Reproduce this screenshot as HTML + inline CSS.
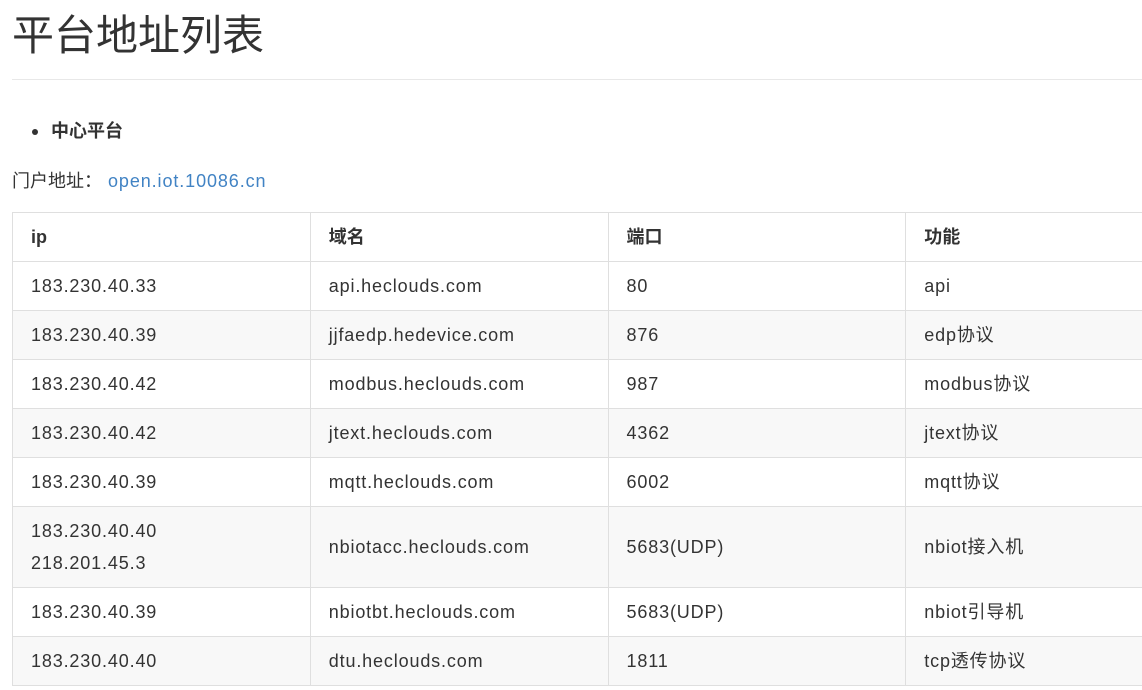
<!DOCTYPE html>
<html><head><meta charset="utf-8"><style>
body{margin:0;width:1142px;height:690px;overflow:hidden;background:#fff;color:#333;font-family:"Liberation Sans","Noto Sans CJK SC",sans-serif;font-size:18px}
h1{position:absolute;left:12px;top:9px;margin:0;font-size:42px;font-weight:normal;line-height:54px}
.hr{position:absolute;left:12px;top:79px;width:1130px;height:1px;background:#e8e8e8}
.li{position:absolute;left:31px;top:118px;font-weight:bold;line-height:26px}
.li:before{content:"";position:absolute;left:1px;top:11px;width:6px;height:6px;border-radius:50%;background:#333}
.li span{margin-left:20px}
.p{position:absolute;left:12px;top:168px;line-height:26px}
.p a{color:#4183c4;text-decoration:none;letter-spacing:0.9px;margin-left:6px}
table{position:absolute;left:12px;top:212px;border-collapse:collapse;width:1192px;table-layout:fixed}
td,th{border:1px solid #dfdfdf;padding:0 18px;text-align:left;height:48px;line-height:32px;white-space:nowrap}
td{letter-spacing:0.85px}
th{font-weight:bold}
tr:nth-child(odd) td{background:#f8f8f8}
</style></head><body>
<h1>平台地址列表</h1>
<div class="hr"></div>
<div class="li"><span>中心平台</span></div>
<div class="p">门户地址：<a>open.iot.10086.cn</a></div>
<table>
<tr><th>ip</th><th>域名</th><th>端口</th><th>功能</th></tr>
<tr><td>183.230.40.33</td><td>api.heclouds.com</td><td>80</td><td>api</td></tr>
<tr><td>183.230.40.39</td><td>jjfaedp.hedevice.com</td><td>876</td><td>edp协议</td></tr>
<tr><td>183.230.40.42</td><td>modbus.heclouds.com</td><td>987</td><td>modbus协议</td></tr>
<tr><td>183.230.40.42</td><td>jtext.heclouds.com</td><td>4362</td><td>jtext协议</td></tr>
<tr><td>183.230.40.39</td><td>mqtt.heclouds.com</td><td>6002</td><td>mqtt协议</td></tr>
<tr><td style="height:80px">183.230.40.40<br>218.201.45.3</td><td>nbiotacc.heclouds.com</td><td>5683(UDP)</td><td>nbiot接入机</td></tr>
<tr><td>183.230.40.39</td><td>nbiotbt.heclouds.com</td><td>5683(UDP)</td><td>nbiot引导机</td></tr>
<tr><td>183.230.40.40</td><td>dtu.heclouds.com</td><td>1811</td><td>tcp透传协议</td></tr>
</table>
</body></html>
